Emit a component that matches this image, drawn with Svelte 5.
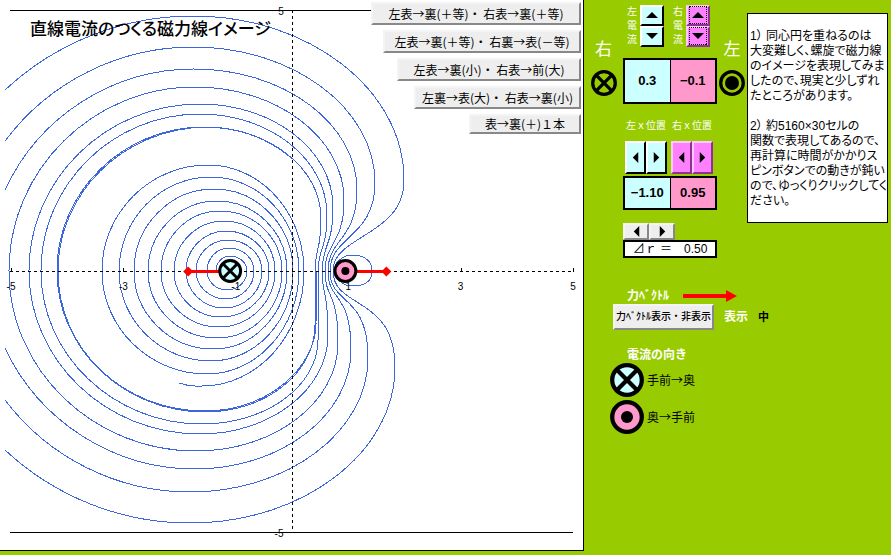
<script>
  let leftCurrent = 0.3;
  let rightCurrent = -0.1;
  let leftX = -1.1;
  let rightX = 0.95;
  let deltaR = 0.5;
  let showForce = true;

  const presets = [
    { label: "左表→裏(＋等)・ 右表→裏(＋等)", width: 210, left: 0.2, right: 0.2 },
    { label: "左表→裏(＋等)・ 右裏→表(－等)", width: 198, left: 0.2, right: -0.2 },
    { label: "左表→裏(小)・ 右表→前(大)", width: 184, left: 0.1, right: 0.3 },
    { label: "左裏→表(大)・ 右表→裏(小)", width: 167, left: -0.3, right: 0.1 },
    { label: "表→裏(＋)１本", width: 112, left: 0.2, right: 0 },
  ];

  const axisLabels = [-5, -3, -1, 1, 3, 5];

  // turns of the left spiral on the axes: left x, top, right x, bottom
  const turns = [
    [216, 230, 256, 247, 227, 290],
    [207, 229, 248, 254, 226, 299],
    [196, 228, 240, 262, 224, 308],
    [186, 226, 231, 269, 221, 317],
    [174, 224, 221, 275, 219, 327],
    [161, 220, 211, 282, 217, 338],
    [148, 217, 201, 287, 213, 349],
    [134, 214, 189, 293, 211, 361],
    [119, 211, 177, 299, 207, 374],
    [102, 208, 165, 304, 202, 386],
  ];

  // outer lines: top, upper right, neck, lower right, bottom, then left x or where it leaves the chart
  const rings = [
    { top: [193, 16], up: [404, 180], neck: 333, low: [395, 367], bottom: [190, 523], exit: [90, 276, 450, 271] },
    { top: [193, 47], up: [375, 183], neck: 330, low: [368, 358], bottom: [190, 492], exit: [141, 235, 400, 232] },
    { top: [194, 69], up: [357, 190], neck: 328, low: [351, 350], bottom: [195, 469], exit: [190, 208, 348, 210] },
    { top: [195, 87], up: [344, 200], neck: 325, low: [338, 343], bottom: [196, 451], left: 9 },
    { top: [200, 104], up: [333, 207], neck: 322, low: [328, 335], bottom: [200, 434], left: 29 },
    { top: [200, 114], up: [327, 215], neck: 318, low: [318, 340], bottom: [202, 424], left: 41 },
    { top: [204, 127], up: [321, 218], neck: 315, low: [315, 325], bottom: [205, 412], left: 57 },
  ];

  const K = 0.55;
  const MID = 271;

  // quarter ellipse, leaving horizontally
  function fromFlat([x, y], [x2, y2]) {
    return `C${x + (x2 - x) * K} ${y} ${x2} ${y2 - (y2 - y) * K} ${x2} ${y2}`;
  }

  // quarter ellipse, leaving vertically
  function fromSteep([x, y], [x2, y2]) {
    return `C${x} ${y + (y2 - y) * K} ${x2 - (x2 - x) * K} ${y2} ${x2} ${y2}`;
  }

  function spiralPath() {
    let d = `M216 ${MID}`;
    turns.forEach(([left, tx, ty, right, bx, by], i) => {
      d += fromSteep([left, MID], [tx, ty]);
      d += fromFlat([tx, ty], [right, MID]);
      d += fromSteep([right, MID], [bx, by]);
      if (turns[i + 1]) d += fromFlat([bx, by], [turns[i + 1][0], MID]);
    });
    return d + "Q190 387 179 383";
  }

  function ringPath(r) {
    const [ux, uy] = r.up;
    const [lx, ly] = r.low;
    let d = r.exit
      ? `M5 ${r.exit[0]}A${r.exit[1]} ${r.exit[1]} 0 0 1 ${r.top[0]} ${r.top[1]}`
      : `M${r.left} ${MID}` + fromSteep([r.left, MID], r.top);
    d += fromFlat(r.top, r.up);
    d += `C${ux} ${uy + (MID - uy) * 0.62} ${r.neck} ${MID - (MID - uy) * 0.4} ${r.neck} ${MID}`;
    d += `C${r.neck} ${MID + (ly - MID) * 0.4} ${lx} ${ly - (ly - MID) * 0.75} ${lx} ${ly}`;
    d += fromSteep(r.low, r.bottom);
    d += r.exit
      ? `A${r.exit[3]} ${r.exit[3]} 0 0 1 5 ${r.exit[2]}`
      : fromFlat(r.bottom, [r.left, MID]);
    return d;
  }

  const toPx = (x) => 292 + x * 56.2;
  const minus = (n, digits) => n.toFixed(digits).replace("-", "−");

  function usePreset(p) {
    leftCurrent = p.left;
    rightCurrent = p.right;
  }
</script>

{#snippet cross(cx, cy, r, fill)}
  <g stroke="#000" stroke-width={r / 4}>
    <circle {cx} {cy} r={r * 0.87} {fill} />
    <path d="M{cx - r * 0.6} {cy - r * 0.6}L{cx + r * 0.6} {cy + r * 0.6}M{cx + r * 0.6} {cy - r * 0.6}L{cx - r * 0.6} {cy + r * 0.6}" />
  </g>
{/snippet}

{#snippet dot(cx, cy, r, fill, inner)}
  <circle {cx} {cy} r={r * 0.87} {fill} stroke="#000" stroke-width={r / 4} />
  <circle {cx} {cy} r={inner} fill="#000" />
{/snippet}

{#snippet arrow(dir)}
  <svg class="tri {dir}" width="12" height="12" viewBox="0 0 12 12" aria-hidden="true">
    <path d="M6 3L12 9H0Z" />
  </svg>
{/snippet}

<div class="sheet">
  <main class="chart">
    <svg viewBox="0 0 583 550" role="img" aria-label="磁力線">
      <g class="lines">
        <path d={spiralPath()} />
        {#each rings as ring}
          <path d={ringPath(ring)} />
        {/each}
        <path d="M289 156A134 134 0 0 0 208 127C120 128 58 196 58 271C58 350 124 411 205 411C270 411 317 365 316 322C317 300 317 285 317 271" />
        <path d="M335 265Q342 255 352 255C366 255 372 262 372 271C372 280 366 286 352 286Q342 286 336 277" />
      </g>
      <g class="axes">
        <path d="M10 10.5H573M10 532.5H573" />
        <path class="dash" d="M10 271.5H573M292.5 10V529" />
        {#each axisLabels as n}
          <path d="M{Math.round(toPx(n)) + 0.5} 268V272" />
          <text x={toPx(n)} y="290">{n}</text>
        {/each}
        <text x="281" y="15">5</text>
        <text x="279" y="537">-5</text>
      </g>
      {#if showForce}
        <g class="force">
          <path d="M{toPx(leftX)} 271.5h-42M{toPx(rightX)} 271.5h41" />
          <path class="tip" d="M{toPx(leftX) - 47} 271.5l5 -5l5 5l-5 5ZM{toPx(rightX) + 36} 271.5l5 -5l5 5l-5 5Z" />
        </g>
      {/if}
      {@render cross(toPx(leftX), 271, 12, "#cff")}
      {@render dot(toPx(rightX), 271, 12, "#f9c", 4)}
    </svg>
    <h1>直線電流のつくる磁力線イメージ</h1>
    <div class="presets">
      {#each presets as p}
        <button type="button" style:width="{p.width}px" on:click={() => usePreset(p)}>{p.label}</button>
      {/each}
    </div>
  </main>

  <aside>
    <div class="top">
      <div class="side">
        <span>右</span>
        <svg width="28" height="28" viewBox="0 0 28 28">{@render cross(14, 14, 13, "none")}</svg>
      </div>

      <div class="controls">
        <div class="currents">
          <span class="vertical">左電流</span>
          <div class="spin up blue">
            <button type="button" aria-label="左電流を増やす" on:click={() => (leftCurrent += 0.1)}>{@render arrow("n")}</button>
            <button type="button" aria-label="左電流を減らす" on:click={() => (leftCurrent -= 0.1)}>{@render arrow("s")}</button>
          </div>
          <span class="vertical second">右電流</span>
          <div class="spin up pink dotted">
            <button type="button" aria-label="右電流を増やす" on:click={() => (rightCurrent += 0.1)}>{@render arrow("n")}</button>
            <button type="button" aria-label="右電流を減らす" on:click={() => (rightCurrent -= 0.1)}>{@render arrow("s")}</button>
          </div>
        </div>
        <table class="tall">
          <tbody>
            <tr><td>{minus(leftCurrent, 1)}</td><td>{minus(rightCurrent, 1)}</td></tr>
          </tbody>
        </table>

        <div class="positions">
          <div>
            <span>左ｘ位置</span>
            <div class="spin blue">
              <button type="button" aria-label="左を左へ" on:click={() => (leftX -= 0.05)}>{@render arrow("w")}</button>
              <button type="button" aria-label="左を右へ" on:click={() => (leftX += 0.05)}>{@render arrow("e")}</button>
            </div>
          </div>
          <div>
            <span>右ｘ位置</span>
            <div class="spin pink">
              <button type="button" aria-label="右を左へ" on:click={() => (rightX -= 0.05)}>{@render arrow("w")}</button>
              <button type="button" aria-label="右を右へ" on:click={() => (rightX += 0.05)}>{@render arrow("e")}</button>
            </div>
          </div>
        </div>
        <table>
          <tbody>
            <tr><td>{minus(leftX, 2)}</td><td>{minus(rightX, 2)}</td></tr>
          </tbody>
        </table>

        <div class="spin grey">
          <button type="button" aria-label="⊿ｒを減らす" on:click={() => (deltaR -= 0.05)}>{@render arrow("w")}</button>
          <button type="button" aria-label="⊿ｒを増やす" on:click={() => (deltaR += 0.05)}>{@render arrow("e")}</button>
        </div>
        <div class="delta"><span>⊿ｒ ＝</span><span>{deltaR.toFixed(2)}</span></div>
      </div>

      <div class="side">
        <span>左</span>
        <svg width="28" height="28" viewBox="0 0 28 28">{@render dot(14, 14, 13, "none", 7)}</svg>
      </div>

      <div class="note">
        <p>1） 同心円を重ねるのは<br />大変難しく、螺旋で磁力線<br />のイメージを表現してみま<br />したので、現実と少しずれ<br />たところがあります。</p>
        <p>2） 約5160×30セルの<br />関数で表現してあるので、<br />再計算に時間がかかりス<br />ピンボタンでの動きが鈍い<br />ので、ゆっくりクリックしてく<br />ださい。</p>
      </div>
    </div>

    <section class="legend">
      <div class="row heading">
        <h2>力ﾍﾞｸﾄﾙ</h2>
        <svg width="54" height="12" viewBox="0 0 54 12" aria-hidden="true">
          <path d="M0 4H43V0L54 6L43 12V8H0Z" fill="#f00" />
        </svg>
      </div>
      <div class="row toggle">
        <button type="button" on:click={() => (showForce = !showForce)}>力ﾍﾞｸﾄﾙ表示・非表示</button>
        <strong>表示</strong>
        <b>中</b>
      </div>
      <h2 class="direction">電流の向き</h2>
      <div class="row key">
        <svg width="34" height="34" viewBox="0 0 34 34">{@render cross(17, 17, 17, "#cff")}</svg>
        <span>手前→奥</span>
      </div>
      <div class="row key">
        <svg width="34" height="34" viewBox="0 0 34 34">{@render dot(17, 17, 17, "#f9c", 6)}</svg>
        <span>奥→手前</span>
      </div>
    </section>
  </aside>
</div>

<style>
:global(body) {
  background: #99cc00;
}

.sheet {
  display: grid;
  grid-template-columns: minmax(0, 1fr) 307px;
  align-items: start;
  font-family: "Liberation Sans", "Noto Sans CJK JP", sans-serif;
  font-size: 12px;
  line-height: 16px;
  color: #000;
}

button {
  display: flex;
  align-items: center;
  justify-content: center;
  padding: 0;
  border: 2px solid;
  border-color: #f4f4f4 #888 #888 #f4f4f4;
  background: #eee;
  color: #000;
  font: inherit;
  white-space: nowrap;
  cursor: pointer;
}

svg {
  display: block;
}

h1,
h2,
p {
  margin: 0;
}

.chart {
  position: relative;
  background: #fff;
  border-right: 1px solid #000;
  border-bottom: 1px solid #000;
}

.chart > svg {
  width: 100%;
}

.lines path {
  fill: none;
  stroke: #3c66dc;
  shape-rendering: crispEdges;
}

.axes path {
  stroke: #000;
  shape-rendering: crispEdges;
}

.axes .dash {
  fill: none;
  stroke-dasharray: 3 3;
}

.axes text {
  font-size: 10px;
  text-anchor: middle;
}

.force path {
  stroke: #f00;
  stroke-width: 3;
}

.force .tip {
  fill: #f00;
  stroke: none;
}

h1 {
  position: absolute;
  top: 20px;
  left: 30px;
  font-size: 17px;
  line-height: 20px;
  font-weight: 500;
  font-feature-settings: "palt";
}

.presets,
.key {
  font-family: "Noto Sans CJK JP", sans-serif;
}

.presets {
  position: absolute;
  top: 2px;
  right: 2px;
  display: flex;
  flex-direction: column;
  align-items: flex-end;
  gap: 5px;
}

.presets button {
  height: 23px;
}

.presets button:last-child {
  height: 20px;
}

.top {
  display: grid;
  grid-template-columns: 39px 94px 30px 1fr;
  align-items: start;
  padding-right: 4px;
}

.side {
  display: flex;
  flex-direction: column;
  align-items: center;
  gap: 9px;
  padding-top: 40px;
  color: #fff;
  font-size: 17px;
  line-height: 20px;
}

.currents {
  display: flex;
  align-items: center;
  height: 43px;
  padding: 4px 0 11px 4px;
}

.vertical {
  width: 11px;
  margin-right: 2px;
  color: #fff;
  font-size: 10px;
  line-height: 14px;
}

.vertical.second {
  margin-left: 9px;
}

.spin {
  display: flex;
}

.spin.up {
  flex-direction: column;
}

.spin button {
  width: 21px;
  height: 33px;
}

.spin.up button {
  width: 24px;
  height: 21px;
}

.spin.blue button {
  background: #ccffff;
  border-color: #fff #000 #000 #fff;
}

.spin.pink button {
  background: #ff80ff;
  border-color: #ffc8ff #903090 #903090 #ffc8ff;
}

.spin.dotted svg {
  outline: 1px dotted #000;
  outline-offset: 2px;
}

.spin.grey {
  padding-top: 13px;
}

.spin.grey button {
  width: 26px;
  height: 17px;
}

.spin:not(.up) .tri {
  width: 11px;
  height: 11px;
}

.tri.s {
  transform: rotate(180deg);
}

.tri.w {
  transform: rotate(-90deg);
}

.tri.e {
  transform: rotate(90deg);
}

table {
  width: 100%;
  table-layout: fixed;
  border-collapse: collapse;
  border: 2px solid #000;
}

td {
  height: 30px;
  padding: 0;
  background: #ccffff;
  font-weight: bold;
  font-size: 13px;
  text-align: center;
}

td + td {
  border-left: 1px solid #000;
  background: #ff99cc;
}

.tall td {
  height: 42px;
}

.positions {
  display: flex;
  gap: 4px;
  padding: 16px 0 2px 2px;
}

.positions span {
  display: block;
  height: 21px;
  padding-left: 1px;
  color: #fff;
  font-size: 10px;
  line-height: 12px;
  white-space: nowrap;
}

.delta {
  display: flex;
  justify-content: center;
  gap: 12px;
  height: 14px;
  border: 2px solid #000;
  background: #fff;
  line-height: 14px;
}

.note {
  margin-top: 13px;
  padding: 15px 0 13px 2px;
  border: 1px solid #000;
  background: #fff;
  line-height: 15px;
  white-space: nowrap;
  font-feature-settings: "palt";
}

.note p + p {
  margin-top: 15px;
}

.legend {
  padding: 30px 0 0 26px;
}

.row {
  display: flex;
  align-items: center;
}

h2 {
  color: #fff;
  font-size: 12px;
  line-height: 16px;
}

.heading {
  gap: 14px;
  padding-left: 17px;
}

.toggle {
  gap: 10px;
  margin-left: 3px;
}

.toggle button {
  width: 101px;
  height: 26px;
  font-size: 10px;
  font-weight: 500;
}

.toggle strong {
  color: #fff;
}

.toggle b {
  font-size: 11px;
}

.direction {
  padding: 17px 0 0 17px;
}

.key {
  gap: 3px;
  padding-bottom: 3px;
}
</style>
